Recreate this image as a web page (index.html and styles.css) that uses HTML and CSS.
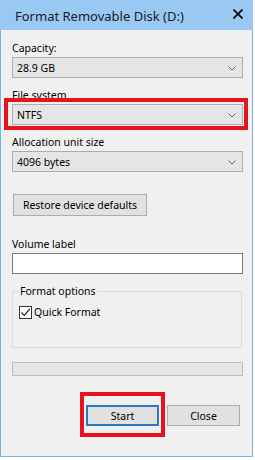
FILE: index.html
```html
<!DOCTYPE html>
<html lang="en">
<head>
  <meta charset="UTF-8">
  <title>Format Removable Disk (D:)</title>
  <link rel="stylesheet" href="styles.css">
</head>
<body>
  <div class="window">
    <!-- Title bar -->
    <div class="titlebar">
      <span class="title">Format Removable Disk (D:)</span>
      <svg class="close-x" width="10" height="10" viewBox="0 0 10 10">
        <path d="M0.5 0.5 L9.5 9.5 M9.5 0.5 L0.5 9.5" stroke="#000" stroke-width="1.6"/>
      </svg>
    </div>

    <div class="content">
      <div class="field">
        <div class="label">Capacity:</div>
        <div class="combo">
          <span>28.9 GB</span>
          <svg class="chevron" width="8" height="5" viewBox="0 0 8 5"><path d="M0.5 0.5 L4 4 L7.5 0.5" fill="none" stroke="#606060"/></svg>
        </div>
      </div>

      <div class="field">
        <div class="label">File system</div>
        <div class="combo marked">
          <span>NTFS</span>
          <svg class="chevron" width="8" height="5" viewBox="0 0 8 5"><path d="M0.5 0.5 L4 4 L7.5 0.5" fill="none" stroke="#606060"/></svg>
        </div>
      </div>

      <div class="field">
        <div class="label">Allocation unit size</div>
        <div class="combo">
          <span>4096 bytes</span>
          <svg class="chevron" width="8" height="5" viewBox="0 0 8 5"><path d="M0.5 0.5 L4 4 L7.5 0.5" fill="none" stroke="#606060"/></svg>
        </div>
      </div>

      <button class="btn restore">Restore device defaults</button>

      <div class="field volume">
        <div class="label">Volume label</div>
        <input class="textbox" type="text">
      </div>

      <fieldset class="group">
        <legend>Format options</legend>
        <div class="check">
          <span class="box">
            <svg width="11" height="11" viewBox="0 0 11 11"><path d="M1.5 5.5 L4.2 8.3 L9.8 1.8" fill="none" stroke="#222" stroke-width="1.2"/></svg>
          </span>
          Quick Format
        </div>
      </fieldset>

      <div class="progress"></div>

      <div class="actions">
        <button class="btn start marked">Start</button>
        <button class="btn">Close</button>
      </div>
    </div>
  </div>
</body>
</html>
```

FILE: styles.css
```css
* {
  margin: 0;
  padding: 0;
  box-sizing: border-box;
  font-family: "Noto Sans", "Open Sans", sans-serif;
}
body {
  background: #fff;
  color: #000;
}
.window {
  width: 253px;
  height: 457px;
  background: #f0f0f0;
  border: 1px solid #74b4e8;
  border-top: none;
}
.titlebar {
  height: 30px;
  background: #99c9f2;
  display: flex;
  align-items: center;
  justify-content: space-between;
  padding: 1px 10px 0 15px;
  margin: 0 -1px;
}
.title {
  font-size: 13px;
  color: #1a1a2a;
}
.close-x {
  margin-top: -3px;
}
.content {
  padding: 10px 9px 0 11px;
  font-size: 10.5px;
}
.label {
  height: 17px;
  line-height: 17px;
}
.field + .field {
  margin-top: 9px;
}
.combo {
  position: relative;
  height: 21px;
  background: #e5e5e5;
  border: 1px solid #adadad;
  display: flex;
  align-items: center;
  justify-content: space-between;
  padding: 0 6px 0 4px;
}
.chevron {
  margin-top: 1px;
}
.marked::after {
  content: "";
  position: absolute;
  border: 4px solid #e4131c;
  pointer-events: none;
}
.combo.marked::after {
  top: -7px;
  bottom: -6px;
  left: -9px;
  right: -6px;
}
.btn {
  height: 21px;
  background: #e1e1e1;
  border: 1px solid #adadad;
  font-size: 10.5px;
  color: #000;
}
.restore {
  display: block;
  width: 134px;
  height: 22px;
  margin-top: 22px;
  margin-left: 1px;
}
.field.volume {
  margin-top: 20px;
}
.textbox {
  display: block;
  width: 100%;
  height: 21px;
  background: #fff;
  border: 1px solid #7a7a7a;
}
.group {
  margin-top: 9px;
  border: 1px solid #dcdcdc;
  padding: 5px 6px 27px;
  width: 230px;
}
.group legend {
  padding: 0 1px;
  line-height: 16px;
}
.check {
  display: flex;
  align-items: center;
  height: 16px;
  gap: 2px;
}
.check .box {
  width: 13px;
  height: 13px;
  border: 1px solid #333;
  background: #fff;
  display: flex;
  align-items: center;
  justify-content: center;
}
.progress {
  margin-top: 14px;
  height: 14px;
  background: #e6e6e6;
  border: 1px solid #bcbcbc;
}
.actions {
  display: flex;
  justify-content: flex-end;
  gap: 8px;
  margin-top: 29px;
  padding-right: 3px;
}
.actions .btn {
  width: 73px;
}
.start {
  position: relative;
  border: 2px solid #2b79c2;
}
.start.marked::after {
  top: -15px;
  bottom: -13px;
  left: -8px;
  right: -8px;
}
```
